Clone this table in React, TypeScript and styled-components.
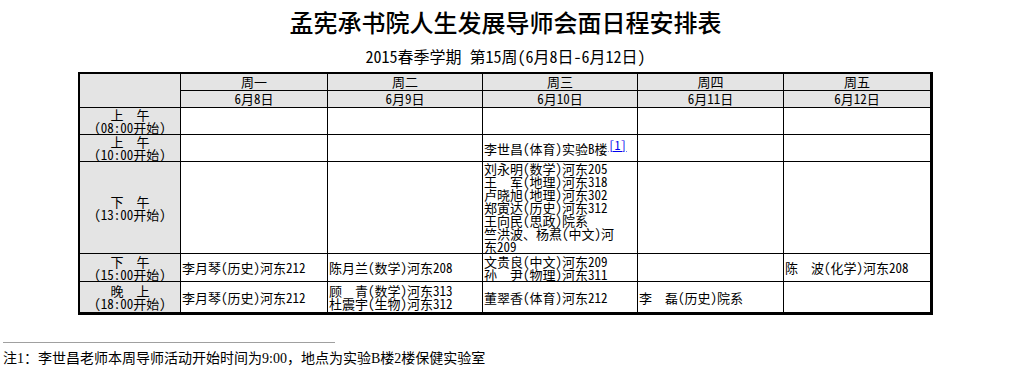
import { Fragment } from "react";
import styled, { createGlobalStyle } from "styled-components";

const GlobalStyle = createGlobalStyle`
  html, body {
    margin: 0;
    padding: 0;
    background: #fff;
  }
  body {
    font-family: "Noto Sans CJK SC", sans-serif;
    color: #000;
  }
`;

const Page = styled.div`
  width: 1011px;
  padding-top: 8px;
`;

const Title = styled.h1`
  margin: 0;
  text-align: center;
  font-size: 24px;
  line-height: 28px;
  font-weight: 500;
`;

const Subtitle = styled.div`
  margin-top: 10px;
  text-align: center;
  font-size: 16px;
  line-height: 20px;
  font-feature-settings: "hwid" 1;
`;

const Schedule = styled.div`
  width: 850px;
  margin: 6px auto 0;
  padding: 2px 3px 3px 2px;
  display: grid;
  grid-template-columns: 100px 146px 154px 154px 145px 146px;
  grid-template-rows: 16px 16px 26px 26px 91px 27px 30px;
  gap: 1px;
  background: #000;
  font-size: 13px;
  line-height: 13px;
  font-feature-settings: "hwid" 1;
`;

const Corner = styled.div`
  grid-row: span 2;
  background: #e4e4e4;
`;

const HeadCell = styled.div`
  background: #e4e4e4;
  display: flex;
  align-items: center;
  justify-content: center;
  line-height: 16px;
`;

const SlotLabel = styled.div`
  background: #e4e4e4;
  display: flex;
  flex-direction: column;
  align-items: center;
  justify-content: center;
  text-align: center;
`;

const Cell = styled.div`
  background: #fff;
  display: flex;
  flex-direction: column;
  justify-content: center;
  padding-left: 1px;
  white-space: nowrap;
`;

const Line = styled.div``;

/* full-width space, kept out of the half-width feature */
const WideSpace = styled.span`
  font-feature-settings: normal;
`;

const NoteRef = styled.a`
  color: #0000ee;
  text-decoration: underline;
  font-size: 12px;
  line-height: 0;
  vertical-align: 4px;
  margin-left: 1px;
`;

const Rule = styled.div`
  width: 332px;
  margin: 27px 0 0 3px;
  border-top: 1px solid #a0a0a0;
`;

const Footnote = styled.div`
  margin: 7px 0 0 3px;
  font-family: "Liberation Serif", "Noto Sans CJK SC", serif;
  font-size: 14px;
  line-height: 18px;
`;

const days = [
  ["周一", "6月8日"],
  ["周二", "6月9日"],
  ["周三", "6月10日"],
  ["周四", "6月11日"],
  ["周五", "6月12日"],
];

type Slot = {
  label: string[];
  cells: string[][];
};

const slots: Slot[] = [
  { label: ["上　午", "(08:00开始)"], cells: [[], [], [], [], []] },
  { label: ["上　午", "(10:00开始)"], cells: [[], [], ["李世昌(体育)实验B楼"], [], []] },
  {
    label: ["下　午", "(13:00开始)"],
    cells: [
      [],
      [],
      [
        "刘永明(数学)河东205",
        "王　军(地理)河东318",
        "卢晓旭(地理)河东302",
        "郑寅达(历史)河东312",
        "王向民(思政)院系",
        "竺洪波、杨焄(中文)河",
        "东209",
      ],
      [],
      [],
    ],
  },
  {
    label: ["下　午", "(15:00开始)"],
    cells: [
      ["李月琴(历史)河东212"],
      ["陈月兰(数学)河东208"],
      ["文贵良(中文)河东209", "孙　尹(物理)河东311"],
      [],
      ["陈　波(化学)河东208"],
    ],
  },
  {
    label: ["晚　上", "(18:00开始)"],
    cells: [
      ["李月琴(历史)河东212"],
      ["顾　青(数学)河东313", "杜震宇(生物)河东312"],
      ["董翠香(体育)河东212"],
      ["李　磊(历史)院系"],
      [],
    ],
  },
];

const Text = ({ value }: { value: string }) => {
  const parts = value.split("　");
  return (
    <>
      {parts.map((p, i) => (
        <Fragment key={i}>
          {i > 0 && <WideSpace>　</WideSpace>}
          {p}
        </Fragment>
      ))}
    </>
  );
};

const App = () => {
  return (
    <>
      <GlobalStyle />
      <Page>
        <Title>孟宪承书院人生发展导师会面日程安排表</Title>
        <Subtitle>2015春季学期 第15周(6月8日-6月12日)</Subtitle>
        <Schedule>
          <Corner />
          {days.map(([day]) => (
            <HeadCell key={day}>{day}</HeadCell>
          ))}
          {days.map(([, date]) => (
            <HeadCell key={date}>{date}</HeadCell>
          ))}
          {slots.map((slot, i) => (
            <Fragment key={i}>
              <SlotLabel>
                {slot.label.map((l) => (
                  <Line key={l}>
                    <Text value={l} />
                  </Line>
                ))}
              </SlotLabel>
              {slot.cells.map((lines, j) => (
                <Cell key={j}>
                  {lines.map((l, k) => (
                    <Line key={k}>
                      <Text value={l} />
                      {i === 1 && j === 2 && (
                        <NoteRef href="#note1">[1]</NoteRef>
                      )}
                    </Line>
                  ))}
                </Cell>
              ))}
            </Fragment>
          ))}
        </Schedule>
        <Rule />
        <Footnote id="note1">
          注1：李世昌老师本周导师活动开始时间为9:00，地点为实验B楼2楼保健实验室
        </Footnote>
      </Page>
    </>
  );
};

export default App;
